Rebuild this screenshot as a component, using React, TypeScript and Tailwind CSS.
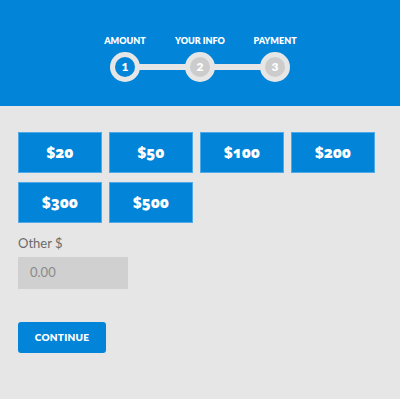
import React from 'react';

const steps = [
  { label: 'AMOUNT', n: 1, active: true },
  { label: 'YOUR INFO', n: 2, active: false },
  { label: 'PAYMENT', n: 3, active: false },
];

const amounts = ['$20', '$50', '$100', '$200', '$300', '$500'];

export default function App() {
  return (
    <div className="w-[400px] h-[399px] bg-[#e6e6e6] font-['Lato',sans-serif]">
      {/* Stepper header */}
      <div className="h-[106px] bg-[#0284d8] flex justify-center pt-[35px]">
        <div className="relative flex">
          <div className="absolute left-[37px] right-[37px] top-[29px] h-[6px] bg-[#e6e6e6]" />
          {steps.map((s) => (
            <div key={s.n} className="relative w-[75px] flex flex-col items-center">
              <span className="text-[9px] leading-[11px] font-extrabold text-white">
                {s.label}
              </span>
              <div className="mt-[6px] w-[30px] h-[30px] rounded-full bg-[#e6e6e6] flex items-center justify-center">
                <div
                  className={`w-[20px] h-[20px] rounded-full flex items-center justify-center text-white text-[12px] font-extrabold ${
                    s.active ? 'bg-[#0284d8]' : 'bg-[#cccccc]'
                  }`}
                >
                  {s.n}
                </div>
              </div>
            </div>
          ))}
        </div>
      </div>

      {/* Amount options */}
      <div className="pl-[18px] pt-[26px]">
        <div className="grid grid-cols-[repeat(4,84px)] gap-x-[7px] gap-y-[9px]">
          {amounts.map((a) => (
            <button
              key={a}
              className="h-[41px] bg-[#0284d8] border border-[#4ea9e6] text-white text-[15px] font-['Open_Sans',sans-serif] font-extrabold oldstyle-nums"
            >
              {a}
            </button>
          ))}
        </div>

        <div className="mt-[11px] text-[13px] text-[#6b6b6b]">Other $</div>
        <div className="mt-[3px] w-[110px] h-[32px] bg-[#d0d0d0] flex items-center pl-[12px] text-[13px] text-[#8a8a8a]">
          0.00
        </div>

        <button className="mt-[33px] w-[88px] h-[31px] rounded-[3px] bg-[#0284d8] text-white text-[10px] font-extrabold tracking-wide">
          CONTINUE
        </button>
      </div>
    </div>
  );
}
